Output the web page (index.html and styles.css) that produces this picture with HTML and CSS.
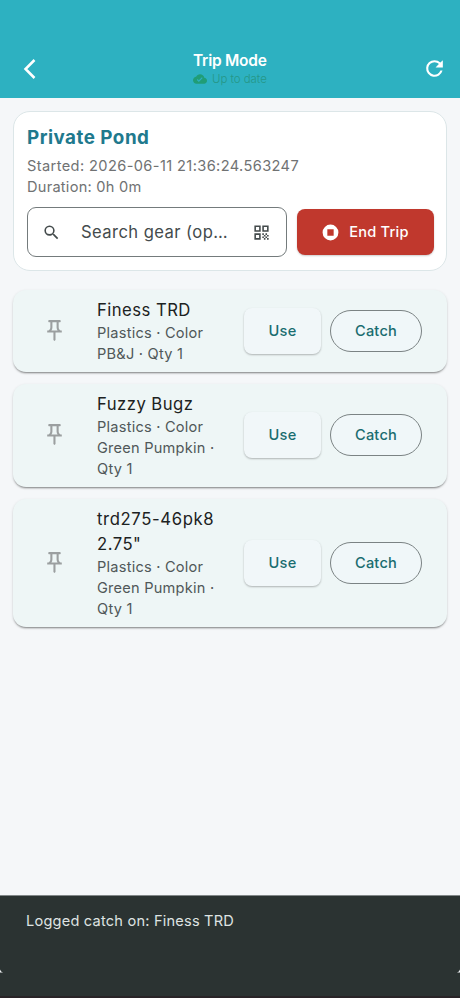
FILE: index.html
```html
<!DOCTYPE html>
<html lang="en">
<head>
<meta charset="utf-8">
<title>Trip Mode</title>
<link rel="stylesheet" href="styles.css">
</head>
<body>
<svg class="defs" width="0" height="0">
  <symbol id="pin" viewBox="0 0 24 24"><path fill-rule="evenodd" d="M14 4v5c0 1.12.37 2.16 1 3H9c.65-.86 1-1.9 1-3V4h4m3-2H7c-.55 0-1 .45-1 1s.45 1 1 1h1v5c0 1.66-1.34 3-3 3v2h5.97v7l1 1 1-1v-7H19v-2c-1.66 0-3-1.34-3-3V4h1c.55 0 1-.45 1-1s-.45-1-1-1z"/></symbol>
</svg>
<header class="bar">
  <svg class="back" viewBox="0 0 14 22"><path d="M11.5 2 2.5 11l9 9"/></svg>
  <div class="heading">
    <h1>Trip Mode</h1>
    <div class="sync"><svg viewBox="0 0 24 24"><path d="M19.35 10.04C18.67 6.59 15.64 4 12 4 9.11 4 6.6 5.64 5.35 8.04 2.34 8.36 0 10.91 0 14c0 3.31 2.69 6 6 6h13c2.76 0 5-2.24 5-5 0-2.64-2.05-4.78-4.65-4.96zM10 17l-3.5-3.5 1.41-1.41L10 14.17l5.18-5.17 1.41 1.41L10 17z"/></svg><span>Up to date</span></div>
  </div>
  <svg class="refresh" viewBox="0 0 24 24"><path d="M17.65 6.35A7.96 7.96 0 0 0 12 4a8 8 0 1 0 7.73 10h-2.08A6 6 0 1 1 12 6c1.66 0 3.14.69 4.22 1.78L13 11h7V4l-2.35 2.35z"/></svg>
</header>
<main>
  <section class="trip">
    <h2>Private Pond</h2>
    <p class="started">Started: 2026-06-11 21:36:24.563247</p>
    <p>Duration: 0h 0m</p>
    <div class="controls">
      <div class="search">
        <svg class="glass" viewBox="0 0 24 24"><path d="M15.5 14h-.79l-.28-.27A6.47 6.47 0 0 0 16 9.5 6.5 6.5 0 1 0 9.5 16c1.61 0 3.09-.59 4.23-1.57l.27.28v.79l5 4.99L20.49 19l-4.99-5zm-6 0a4.5 4.5 0 1 1 0-9 4.5 4.5 0 0 1 0 9z"/></svg>
        <span>Search gear (op…</span>
        <svg class="qr" viewBox="0 0 24 24"><path fill-rule="evenodd" d="M3 3h8v8H3zm2 2v4h4V5zM3 13h8v8H3zm2 2v4h4v-4zM13 3h8v8h-8zm2 2v4h4V5zM13 13h2v2h-2zM15 15h2v2h-2zM13 17h2v2h-2zM15 19h2v2h-2zM17 17h2v2h-2zM19 19h2v2h-2zM17 13h2v2h-2zM19 15h2v2h-2z"/></svg>
      </div>
      <button class="end"><svg viewBox="0 0 24 24"><path fill-rule="evenodd" d="M12 2a10 10 0 1 0 0 20 10 10 0 0 0 0-20zM8 8h8v8H8z"/></svg>End Trip</button>
    </div>
  </section>
  <article class="gear">
    <svg class="pin"><use href="#pin"/></svg>
    <div class="info"><h3>Finess TRD</h3><p>Plastics · Color<br>PB&amp;J · Qty 1</p></div>
    <button class="use">Use</button><button class="catch">Catch</button>
  </article>
  <article class="gear">
    <svg class="pin"><use href="#pin"/></svg>
    <div class="info"><h3>Fuzzy Bugz</h3><p>Plastics · Color<br>Green Pumpkin ·<br>Qty 1</p></div>
    <button class="use">Use</button><button class="catch">Catch</button>
  </article>
  <article class="gear">
    <svg class="pin"><use href="#pin"/></svg>
    <div class="info"><h3><span class="model">trd275-46pk8</span><br>2.75"</h3><p>Plastics · Color<br>Green Pumpkin ·<br>Qty 1</p></div>
    <button class="use">Use</button><button class="catch">Catch</button>
  </article>
</main>
<footer class="snackbar"><span>Logged catch on: Finess TRD</span>
  <svg class="corner" viewBox="0 0 4 4"><path d="M0 0q1 3 4 4H0z"/></svg>
  <svg class="corner right" viewBox="0 0 4 4"><path d="M0 0q1 3 4 4H0z"/></svg>
</footer>
</body>
</html>
```
FILE: styles.css
```css
* { box-sizing: border-box; }
body {
  margin: 0;
  height: 998px;
  display: flex;
  flex-direction: column;
  overflow: hidden;
  background: #f5f7f9;
  font-family: Inter, "Liberation Sans", sans-serif;
}
h1, h2, h3, p { margin: 0; font-weight: 400; }
svg { display: block; flex: none; fill: currentColor; }
.defs { position: absolute; }
button { font: inherit; border: 0; padding: 0; flex: none; }

.bar {
  height: 98px;
  padding: 39px 13px 0 23px;
  display: flex;
  align-items: center;
  justify-content: space-between;
  background: #2db1c1;
  color: #fff;
}
.back { width: 14px; height: 22px; fill: none; stroke: currentColor; stroke-width: 2.5; }
.refresh { width: 25px; height: 25px; }
.heading { width: 75px; margin-left: 2px; }
.heading h1 { font-size: 15.5px; line-height: 20px; font-weight: 600; letter-spacing: -.25px; white-space: nowrap; }
.sync { display: flex; align-items: center; gap: 5px; height: 15px; color: #259787; font-size: 11.5px; white-space: nowrap; }
.sync svg { width: 14px; height: 14px; color: #209d76; }
.sync span { font-weight: 300; letter-spacing: -.05px; }

main { flex: 1; padding: 13px 13px 0; }
.trip {
  height: 160px;
  padding: 13px 12.5px 0 13px;
  border: 1px solid #dce6e8;
  border-radius: 17px;
  background: #fff;
  margin-bottom: 18.5px;
}
.trip h2 { font-size: 18.8px; line-height: 26px; font-weight: 700; letter-spacing: .5px; color: #20798d; margin-bottom: 5px; }
.trip p { font-size: 14.6px; line-height: 21px; letter-spacing: .25px; color: #707273; white-space: nowrap; }
.trip .started { letter-spacing: .39px; }
.controls { display: flex; align-items: center; gap: 10px; margin: 9px 0 0 -.5px; }
.search {
  width: 260.5px;
  height: 50px;
  padding: 0 15px;
  display: flex;
  align-items: center;
  border: 1px solid #747b7c;
  border-radius: 9px;
  color: #444b4c;
}
.glass { width: 19px; height: 19px; margin-left: -1px; }
.search span { flex: 1; margin-left: 20.5px; font-size: 16.6px; letter-spacing: .42px; white-space: nowrap; }
.qr { width: 19px; height: 19px; }
.end {
  width: 137px;
  height: 46px;
  display: flex;
  align-items: center;
  justify-content: center;
  gap: 9px;
  border-radius: 8px;
  background: #c0382d;
  box-shadow: 0 1px 2px #0003;
  color: #fff;
  font-size: 14.6px;
  font-weight: 500;
  letter-spacing: .2px;
}
.end svg { width: 19px; height: 19px; }

.gear {
  display: flex;
  align-items: center;
  padding: 8px 25px 7px 29px;
  margin-bottom: 12px;
  border-radius: 13px;
  background: #eef6f6;
  box-shadow: 0 2px 2px -1px #0006, 0 1px 3px #0002;
}
.pin { width: 25px; height: 25px; margin-top: -2px; color: #9b9fa0; }
.info { width: 177px; flex: none; padding-left: 30px; white-space: nowrap; }
.info h3 { font-size: 16.7px; line-height: 25px; letter-spacing: .45px; color: #1c2222; }
.info .model { letter-spacing: .62px; }
.info p { font-size: 14.6px; line-height: 21px; letter-spacing: .22px; color: #505859; }
.use, .catch { margin-top: -1px; color: #1a6d70; font-size: 14.6px; font-weight: 500; letter-spacing: .2px; }
.use { width: 77px; height: 46px; border-radius: 8px; background: #f1f7f9; box-shadow: 0 1px 2px #0004; margin-right: 9px; }
.catch { width: 92px; height: 42px; border: 1px solid #7b8384; border-radius: 21px; background: #f0f7f9; }

.snackbar {
  position: relative;
  height: 103px;
  padding: 16px 26px;
  border-top: 1px solid #818788;
  border-bottom: 2px solid #292427;
  background: #2b3332;
  color: #dfe3e2;
  font-size: 14.6px;
  line-height: 18px;
  letter-spacing: .2px;
}
.corner { position: absolute; left: 0; top: 73px; width: 3px; height: 4px; color: #f5f7fa; }
.right { left: auto; right: 0; transform: scaleX(-1); }
```
